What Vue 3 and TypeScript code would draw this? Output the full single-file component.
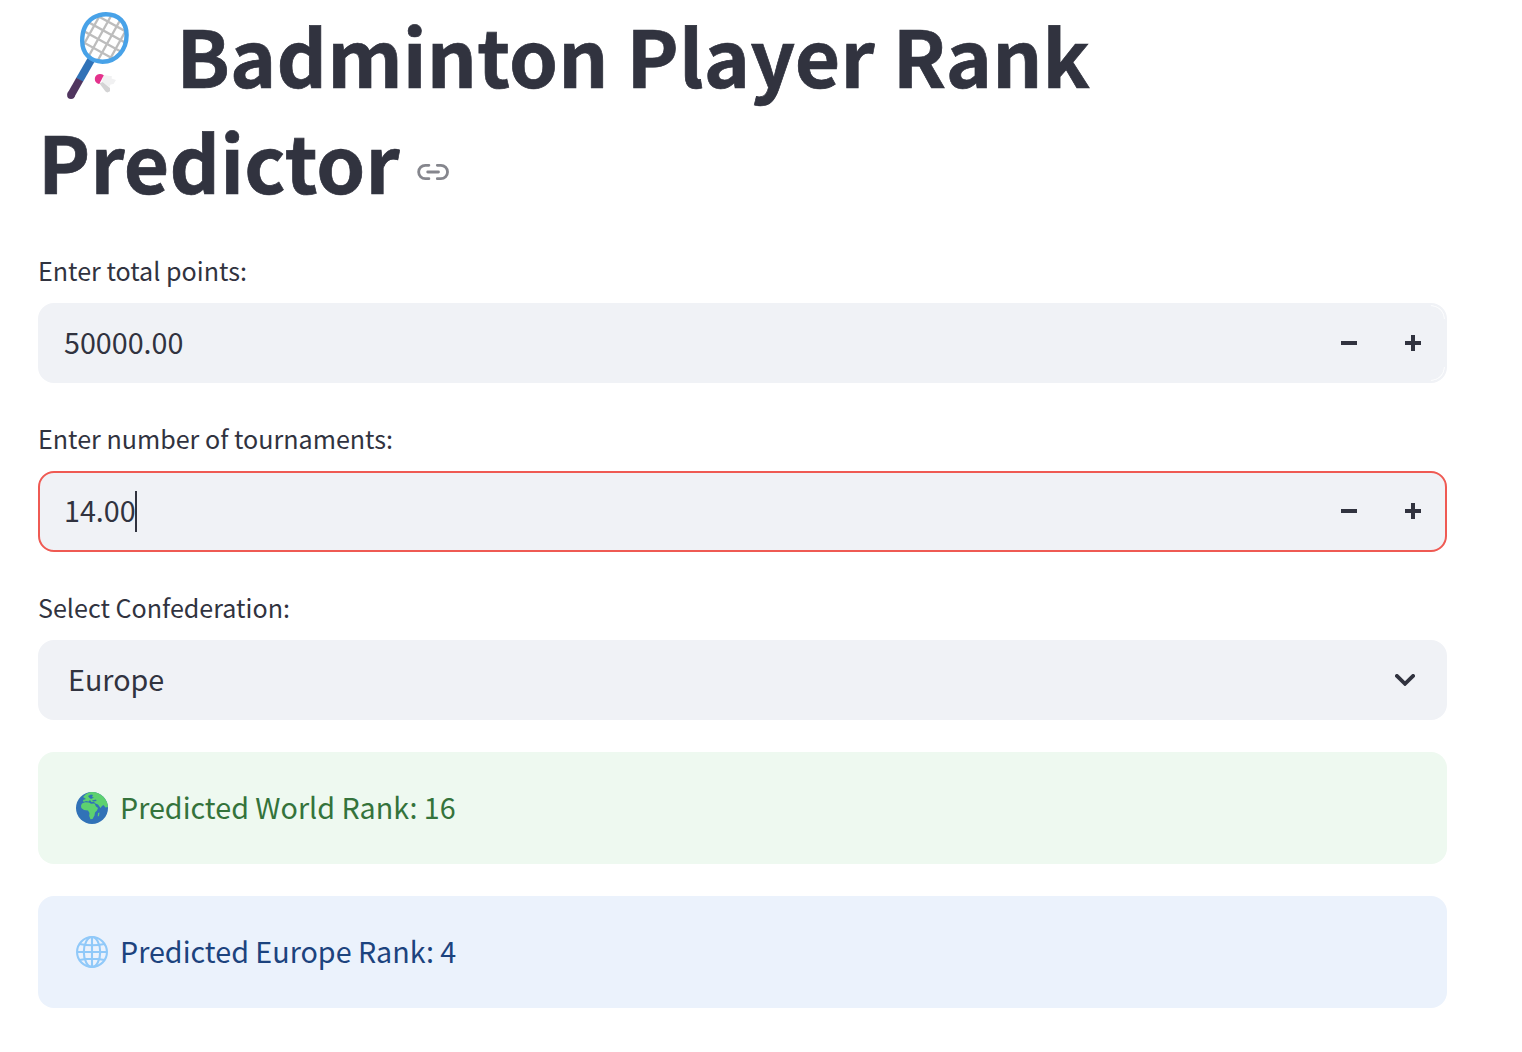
<script setup lang="ts">
interface NumberField {
  label: string
  value: string
  focused: boolean
}

const numberFields: NumberField[] = [
  { label: 'Enter total points:', value: '50000.00', focused: false },
  { label: 'Enter number of tournaments:', value: '14.00', focused: true },
]
const confederation = 'Europe'
const worldRank = 16
const regionRank = 4
</script>

<template>
  <main class="app">
    <h1 class="title">
      <span class="line">
        <svg class="racket" viewBox="50 0 100 106" aria-hidden="true">
          <g transform="translate(104.5 38) rotate(29)">
            <clipPath id="head"><ellipse rx="21.5" ry="24" /></clipPath>
            <ellipse rx="21" ry="23.5" fill="#fff" />
            <path
              clip-path="url(#head)"
              d="M-15-30V30M-5-30V30M5-30V30M15-30V30M-30-16H30M-30-6H30M-30 4H30M-30 14H30"
              fill="none" stroke="#bdbdbd" stroke-width="2.300"
            />
          </g>
          <path d="M91 60L79.500 80" stroke="#3072b7" stroke-width="7.800" />
          <path d="M79.700 79.600L71 95" stroke="#50355f" stroke-width="7.800" />
          <circle cx="71" cy="95" r="3.900" fill="#50355f" />
          <path
            d="M84.500 28C88.500 19 97 14.200 106 14.200C118.500 14.200 126.600 22.500 126.600 35C126.600 50 116.500 61.700 102.500 61.700C90 61.700 82.200 53 82.200 41C82.200 36 82.700 32 84.500 28Z"
            fill="none" stroke="#48a2e8" stroke-width="4.400"
          />
          <path d="M103.500 75L112 76.200L111.500 78.500L116 80L113.500 84L110.500 84.500L109.500 87L102 82Z" fill="#f1f1f2" />
          <path d="M99.500 83.500L102.500 82L110 88L110 91.300L107.300 92.500L105.500 91.500Z" fill="#d3d3d4" />
          <path d="M103.800 75.200C101 73.200 96.500 73.500 95.200 77C94 80.500 96 83.800 99.300 84Z" fill="#e4328c" />
        </svg><span class="text title-first">Badminton Player Rank</span>
      </span>
      <span class="line">
        <span class="text title-second">Predictor</span>
        <svg class="anchor" viewBox="0 0 34 18" aria-hidden="true">
          <path
            d="M12.900 2.350H9.300A6.650 6.650 0 0 0 9.300 15.650H12.900M21.300 2.350H24.900A6.650 6.650 0 0 1 24.900 15.650H21.300M11.700 9H22.500"
            fill="none" stroke="#85868d" stroke-width="2.800" stroke-linecap="round"
          />
        </svg>
      </span>
    </h1>

    <section v-for="field in numberFields" :key="field.label" class="group">
      <label class="label">{{ field.label }}</label>
      <div class="field" :class="field.focused ? 'focused' : 'resting'">
        <span class="value">{{ field.value }}</span>
        <span v-if="field.focused" class="caret"></span>
        <button class="step" type="button" aria-label="Decrease">
          <svg viewBox="0 0 16 16"><path d="M0 6H16V10H0Z" /></svg>
        </button>
        <button class="step" type="button" aria-label="Increase">
          <svg viewBox="0 0 16 16"><path d="M6 0H10V6H16V10H10V16H6V10H0V6H6Z" /></svg>
        </button>
      </div>
    </section>

    <section class="group select-group">
      <label class="label">Select Confederation:</label>
      <div class="field select">
        <span class="value">{{ confederation }}</span>
        <svg class="chevron" viewBox="0 0 20 12" aria-hidden="true">
          <path d="M1.900 1.900L10 9.800L18.100 1.900" fill="none" stroke="#31333f" stroke-width="3.800" stroke-linecap="round" />
        </svg>
      </div>
    </section>

    <div class="alert success">
      <svg class="globe" viewBox="0 0 32 32" aria-hidden="true">
        <clipPath id="earth"><circle cx="16" cy="16" r="16" /></clipPath>
        <circle cx="16" cy="16" r="16" fill="#3172b7" />
        <g clip-path="url(#earth)" fill="#5dd16f">
          <path d="M7 5L10 2L16-1H24L32 8V15L29.500 15.500L27.500 13L26 14L24.500 16L22 12.500L19.500 11.500L18 10L15.500 10L14 8L12.500 9.500L10 9L7.500 10L7 8L10 7L8.500 6Z" />
          <path d="M6 11.500L9 10.200L13 10.500L15 11.700L18.500 11.500L20 14.500L22 16L21 18.500L19 20.500L18.500 23.500L16.500 27L14.500 27.300L13.200 24L13.500 21L12 18.500L8 18L5.300 16L5 13.500Z" />
          <path d="M22 21L23.500 20.500L23 24L21.700 24.500Z" />
        </g>
        <path d="M12 4L15 2.500L17 3L16 5L18 5.500L15 7L13.500 6ZM16 8.500L20 7.500L20.500 9L17 9.500Z" fill="#3172b7" />
      </svg>
      <span class="message">Predicted World Rank: {{ worldRank }}</span>
    </div>
    <div class="alert info">
      <svg class="globe" viewBox="0 0 32 32" aria-hidden="true">
        <g fill="none" stroke="#90c9f9" stroke-width="2.100">
          <circle cx="16" cy="16" r="14.950" />
          <ellipse cx="16" cy="16" rx="8.200" ry="15" />
          <path d="M16 1V31M1 16H31M3.500 8Q16 10.500 28.500 8M3.500 24Q16 21.500 28.500 24" />
        </g>
      </svg>
      <span class="message">Predicted Europe Rank: {{ regionRank }}</span>
    </div>
  </main>
</template>

<style>
body {
  margin: 0;
  background: #fff;
}
</style>

<style scoped>
.app {
  box-sizing: border-box;
  width: 1447px;
  height: 1052px;
  padding-left: 38px;
  color: #31333f;
  font-family: "Noto Sans CJK SC", "Noto Sans", sans-serif;
  font-size: 28.7px;
}
.title {
  display: flex;
  flex-direction: column;
  margin: 0 0 44px;
  font-size: 78.400px;
  font-weight: 700;
  line-height: 108px;
  letter-spacing: 0.150px;
  white-space: nowrap;
  -webkit-text-stroke: 0.7px #31333f;
}
.line {
  display: flex;
  height: 106px;
}
.racket {
  width: 100px;
  height: 106px;
  margin-left: 12px;
}
.title-first {
  margin-left: 26.500px;
}
.anchor {
  width: 34px;
  height: 18px;
  margin: 57px 0 0 16px;
}
.group {
  height: 168.400px;
}
.select-group {
  height: 159px;
}
.label {
  display: block;
  height: 47px;
  line-height: 28px;
  font-size: 25.100px;
  white-space: nowrap;
}
.field {
  box-sizing: border-box;
  display: flex;
  align-items: center;
  height: 80px;
  padding-left: 24px;
  border: 2px solid #f0f2f6;
  border-radius: 16px;
  background-color: #f0f2f6;
  line-height: 76px;
}
.value {
  height: 78px;
}
.resting {
  background-image:
    radial-gradient(circle at 0 100%, transparent 12.400px, #fafbfc 13px, #fafbfc 13.600px, transparent 14px),
    radial-gradient(circle at 0 0, transparent 12.400px, #fafbfc 13px, #fafbfc 13.600px, transparent 14px);
  background-position: right top, right bottom;
  background-size: 14px 14px;
  background-repeat: no-repeat;
}
.focused {
  height: 81px;
  padding-bottom: 1px;
  border-color: #ef5a53;
}
.caret {
  width: 2px;
  height: 41px;
  margin-left: -0.800px;
  background: #31333f;
}
.step {
  display: flex;
  align-items: center;
  justify-content: center;
  width: 64px;
  height: 76px;
  padding: 0;
  border: 0;
  background: none;
}
.value + .step,
.caret + .step {
  margin-left: auto;
}
.step svg {
  width: 16px;
  height: 16px;
  fill: #31333f;
}
.select {
  padding-left: 28px;
  padding-right: 30px;
}
.chevron {
  width: 20px;
  height: 12px;
  margin-left: auto;
}
.alert {
  display: flex;
  align-items: center;
  height: 112px;
  margin-bottom: 32px;
  padding-left: 38px;
  border-radius: 16px;
}
.message {
  padding-bottom: 2px;
}
.success {
  background: #eef9f0;
  color: #34733b;
}
.info {
  background: #ebf2fc;
  color: #1c437e;
}
.globe {
  width: 32px;
  height: 32px;
  margin-right: 12px;
}
</style>
